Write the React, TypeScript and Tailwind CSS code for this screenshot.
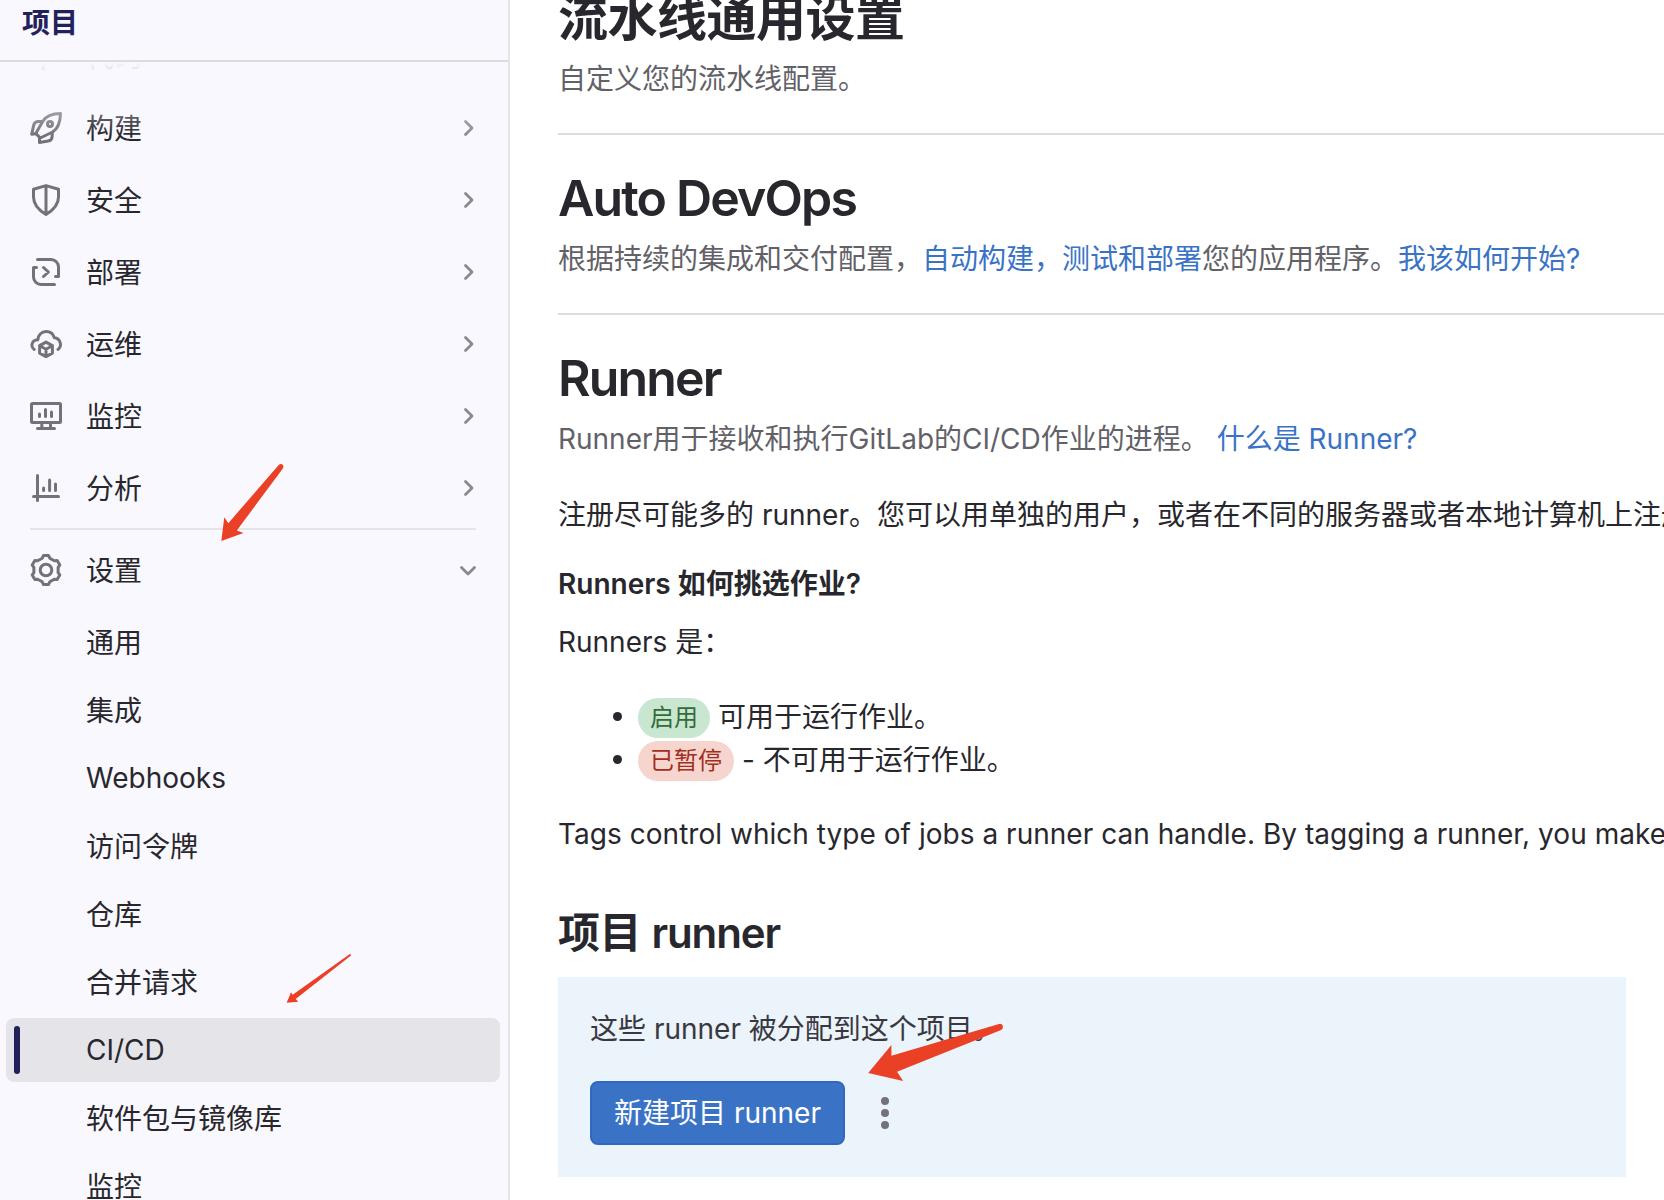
import type { ReactNode } from "react";

const gearPoints = Array.from({ length: 6 }, (_, i) => {
  const a = (i * Math.PI) / 3;
  const rotate = ([x, y]: number[]) =>
    `${(8 + x * Math.cos(a) - y * Math.sin(a)).toFixed(2)},${(8 + x * Math.sin(a) + y * Math.cos(a)).toFixed(2)}`;
  return [[-1.9, -5.9], [-1.3, -7.2], [1.3, -7.2], [1.9, -5.9]].map(rotate).join(" ");
}).join(" ");

const icons: Record<string, ReactNode> = {
  code: <path d="M4 4.5 .75 8 4 11.5M12 4.5 15.25 8 12 11.5M9.5 1.5l-3 13" />,
  rocket: (
    <>
      <path d="M15.25.75C11 .8 8.2 1.7 6.4 4.6L2.9 10.7l2.2 2.3 6.2-3c2.900-1.800 3.850-4.900 3.950-9.250z" />
      <path d="M6.300 4.750H4.200c-1.300 0-2 .500-2.300 1.700L.850 11.100l2-.200M4.750 12.800v2.450l4.300-.750c1.200-.200 1.900-.900 2-2.100l.100-2.200" />
      <circle cx="10" cy="6" r="1.250" />
    </>
  ),
  shield: <path d="M1.750 2.600 8 .800l6.250 1.800v3.900c0 3.500-2.500 6.500-6.250 8.700-3.750-2.200-6.250-5.200-6.250-8.700zM8 .800v14.200" />,
  deploy: (
    <path d="M3.750 1.750h6.750a3.750 3.750 0 0 1 3.750 3.750v4.750h-1.500M12.250 14.250H5.500a3.750 3.750 0 0 1-3.750-3.750V5.750h1.500M6.750 5.750 9.200 8l-2.450 2.250" />
  ),
  cloud: (
    <>
      <path d="M2.100 10.750C.4 9.700.4 6.100 3.900 5.900 4.100 3.400 5.900 1.750 8 1.750c2 0 3.600 1.200 4.100 3.100 3.400.300 4 4.500 1.900 5.900" />
      <path d="M8 7.050 11.200 8.800v3.750L8 14.300l-3.200-1.750V8.800zM8 10.600v3.500M8 10.600 5.100 9M8 10.600 10.900 9" />
    </>
  ),
  monitor: (
    <path d="M1.250 1.750h13.500a.5.5 0 0 1 .5.500v8.500a.5.5 0 0 1-.5.500H1.250a.5.5 0 0 1-.5-.500v-8.500a.5.5 0 0 1 .5-.500zM5.900 11.500v2.500M10.250 11.500v2.500M3.750 14.250h8.500M4.750 7v1.300M7.750 4.750v3.550M10.750 6v2.300" />
  ),
  chart: <path d="M3.750 1.750v12.500M1.750 12.300h12.500M6.800 8v1.250M9.800 4v5.250M12.750 6v3.250" />,
  gear: (
    <>
      <polygon points={gearPoints} />
      <circle cx="8" cy="8" r="2.900" />
    </>
  ),
};

function Icon({ name }: { name: string }) {
  return (
    <svg
      className="h-8 w-8 shrink-0 text-[#737278]"
      viewBox="0 0 16 16"
      fill="none"
      stroke="currentColor"
      strokeWidth="1.5"
      strokeLinecap="round"
      strokeLinejoin="round"
    >
      {icons[name]}
    </svg>
  );
}

function Chevron({ open = false }: { open?: boolean }) {
  return (
    <svg className="h-6 w-6" viewBox="0 0 24 24" fill="none" stroke="#89888d" strokeWidth="2.8" strokeLinecap="round" strokeLinejoin="round">
      <path d={open ? "M5.500 9.500 12 16l6.500-6.500" : "M9.500 5.500 16 12l-6.500 6.500"} />
    </svg>
  );
}

function MenuItem({ icon, label, open }: { icon: string; label: string; open?: boolean }) {
  return (
    <li className="flex h-16 shrink-0 items-center pl-6 pr-5">
      <Icon name={icon} />
      <span className="ml-6 grow translate-y-px">{label}</span>
      <Chevron open={open} />
    </li>
  );
}

const menu = [
  ["code", "代码"],
  ["rocket", "构建"],
  ["shield", "安全"],
  ["deploy", "部署"],
  ["cloud", "运维"],
  ["monitor", "监控"],
  ["chart", "分析"],
];

const settings = ["通用", "集成", "Webhooks", "访问令牌", "仓库", "合并请求", "CI/CD", "软件包与镜像库", "监控"];

function Sidebar() {
  return (
    <aside className="flex w-[510px] shrink-0 flex-col border-r-2 border-[#e5e4e9] bg-[#f9f8fe]">
      <header className="h-[62px] shrink-0 border-b-2 border-[#dcdcde] px-[22px] pt-[3px] text-[28px] font-bold leading-[40px] text-[#232159]">
        项目
      </header>
      <nav className="relative min-h-0 grow overflow-hidden">
        <div className="-mt-[38px] pl-1.5 pr-2">
          <ul className="flex flex-col gap-2">
            {menu.map(([icon, label]) => (
              <MenuItem key={label} icon={icon} label={label} />
            ))}
          </ul>
          <hr className="mx-6 mb-2 mt-2 border-t-2 border-[#e5e4e9]" />
          <ul>
            <MenuItem icon="gear" label="设置" open />
          </ul>
          <ul className="mt-2 flex flex-col gap-1">
            {settings.map((label) => (
              <li
                key={label}
                className={
                  label === "CI/CD"
                    ? "flex h-16 shrink-0 items-center rounded-lg bg-[#e5e4e9] pl-2"
                    : "flex h-16 shrink-0 items-center pl-2"
                }
              >
                <span className={label === "CI/CD" ? "h-12 w-1.5 rounded-full bg-[#232159]" : "h-12 w-1.5"} />
                <span className={/^[A-Z]/.test(label) ? "ml-[66px]" : "ml-[66px] translate-y-px"}>{label}</span>
              </li>
            ))}
          </ul>
        </div>
        <div className="pointer-events-none absolute inset-x-0 top-0 h-[74px] bg-linear-to-b from-[#f9f8fe] to-[#f9f8fe]/0" />
      </nav>
    </aside>
  );
}

function Section({ title, children }: { title: ReactNode; children: ReactNode }) {
  return (
    <section className="h-[180px] shrink-0 border-b-2 border-[#dcdcde]">
      <h2 className="pt-[33px] text-[50px] font-semibold leading-[60px] tracking-[-0.5px]">{title}</h2>
      <p className="mt-[11px] leading-[40px] text-[#626168]">{children}</p>
    </section>
  );
}

function Link({ children }: { children: ReactNode }) {
  return <a className="text-[#3a73c6]">{children}</a>;
}

function Main() {
  return (
    <main className="flex min-w-0 grow flex-col overflow-hidden whitespace-nowrap bg-white pl-12">
      <div className="-mt-[45px] flex flex-col">
        <Section title="流水线通用设置">自定义您的流水线配置。</Section>
        <Section title={<span className="tracking-[-1.85px]">Auto DevOps</span>}>
          根据持续的集成和交付配置，<Link>自动构建，测试和部署</Link>您的应用程序。<Link>我该如何开始?</Link>
        </Section>
      </div>
      <h2 className="mt-[33px] text-[50px] font-semibold leading-[60px] tracking-[-1.85px]">Runner</h2>
      <p className="mt-[11px] leading-[40px] text-[#626168]">
        Runner用于接收和执行GitLab的CI/CD作业的进程。 <Link>什么是 Runner?</Link>
      </p>
      <p className="mt-[36px] leading-[40px]">
        注册尽可能多的 runner。您可以用单独的用户，或者在不同的服务器或者本地计算机上注册 runner。
      </p>
      <p className="mt-[29px] font-semibold leading-[40px]">Runners 如何挑选作业?</p>
      <p className="mt-[18px] leading-[40px]">Runners 是：</p>
      <ul className="mt-[36px] flex flex-col gap-[3px] pl-[55px]">
        <li className="flex h-10 items-center">
          <span className="mr-4 -mt-[3px] h-[9px] w-[9px] rounded-full bg-[#28272d]" />
          <span className="mr-2 rounded-full bg-[#c8e6d0] px-3 text-[24px] leading-[40px] text-[#356b3b]">启用</span>
          <span className="-translate-y-px">可用于运行作业。</span>
        </li>
        <li className="flex h-10 items-center">
          <span className="mr-4 -mt-[3px] h-[9px] w-[9px] rounded-full bg-[#28272d]" />
          <span className="mr-2 rounded-full bg-[#f7d5cf] px-3 text-[24px] leading-[40px] text-[#a22e1c]">已暂停</span>
          <span className="-translate-y-px">- 不可用于运行作业。</span>
        </li>
      </ul>
      <p className="mt-[33px] leading-[40px] tracking-[0.03px]">
        Tags control which type of jobs a runner can handle. By tagging a runner, you make sure
      </p>
      <h3 className="mt-[54px] text-[42px] font-semibold leading-[50px] tracking-[-0.4px]">
        项目 <span className="tracking-[-1.1px]">runner</span>
      </h3>
      <div className="mt-[19px] h-[200px] w-[1068px] bg-[#ebf3fb] px-8 pt-8">
        <p className="leading-[40px] text-[#3a383f]">这些 runner 被分配到这个项目。</p>
        <div className="mt-8 flex items-center gap-[36px]">
          <button className="h-16 w-[255px] rounded-lg border-2 border-[#2f68be] bg-[#3a73c6] text-white">新建项目 runner</button>
          <span className="flex flex-col gap-1">
            <i className="h-2 w-2 rounded-full bg-[#737278]" />
            <i className="h-2 w-2 rounded-full bg-[#737278]" />
            <i className="h-2 w-2 rounded-full bg-[#737278]" />
          </span>
        </div>
      </div>
    </main>
  );
}

export default function App() {
  return (
    <div className="relative flex h-[1200px] w-[1664px] overflow-hidden font-['Inter','Noto_Sans_CJK_SC',sans-serif] text-[28px] leading-[40px] text-[#28272d]">
      <Sidebar />
      <Main />
      <svg className="pointer-events-none absolute inset-0" width="1664" height="1200" fill="#ea4126">
        <path d="M221.300 541 224.300 517.300 228.300 523.200 278.500 465.200Q280.500 463 282.500 464.500 284.300 466.300 282.500 469L236.800 530.500 243.500 533z" />
        <path d="M286.700 1002.700 291 992.300 292.700 994.700 349.500 954.300Q351.500 954 351 955.600L295.700 999 298.300 1001.700z" />
        <path d="M868.200 1073 891.400 1045 891.400 1055.700 999 1024Q1002.500 1023.300 1003 1026.500 1003.300 1029 1000.500 1030.300L897 1071.700 903.200 1081z" />
      </svg>
    </div>
  );
}
